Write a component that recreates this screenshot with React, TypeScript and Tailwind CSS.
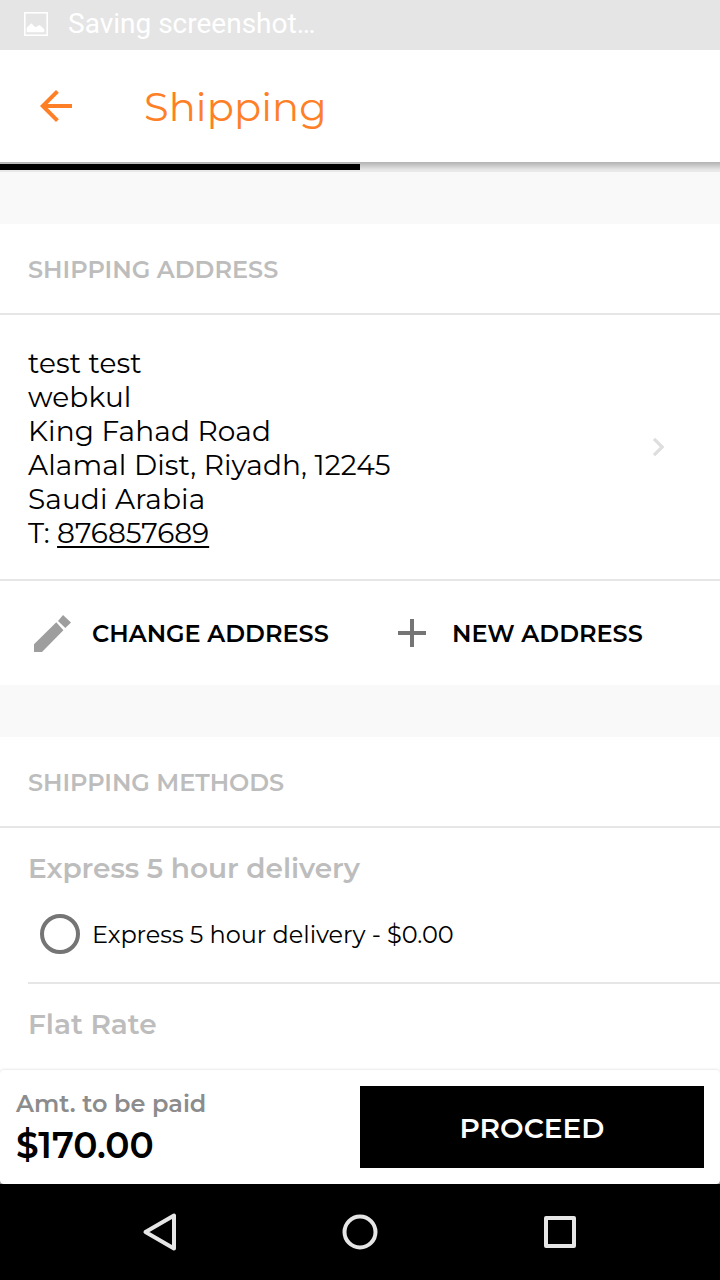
import type { ReactNode } from "react"
import { clsx } from "clsx"

const address = ["test test", "webkul", "King Fahad Road", "Alamal Dist, Riyadh, 12245", "Saudi Arabia"]

function StatusBar() {
  return (
    <div className="flex h-[50px] items-center bg-[#e5e5e5] pb-0.5 pl-6 text-white">
      <svg width="24" height="24" viewBox="0 0 24 24" className="mr-5">
        <rect x="0.8" y="0.8" width="22.4" height="22.4" fill="none" stroke="currentColor" strokeWidth="1.6" />
        <path d="M2.7 20.3v-4.6L7.3 11.3l4 4 4.4-2.3 4.6 4.3v3z" fill="currentColor" />
      </svg>
      <span className="font-['Roboto',sans-serif] text-[28px] leading-[48px]">Saving screenshot…</span>
    </div>
  )
}

function AppBar() {
  return (
    <header className="flex h-28 items-center bg-white pl-8 text-[#ff7f27]">
      <svg width="48" height="48" viewBox="0 0 24 24" fill="currentColor">
        <path d="M20 11H7.83l5.59-5.59L12 4l-8 8 8 8 1.41-1.41L7.83 13H20v-2z" />
      </svg>
      <h1 className="mt-px ml-16 text-[40px] leading-[48px] tracking-[0.1px]">Shipping</h1>
    </header>
  )
}

function Progress() {
  return (
    <div className="h-[10px] bg-linear-to-b from-[#b2b2b2] to-[#e8e8e8] to-80% pt-0.5">
      <div className="h-1.5 w-1/2 bg-black" />
    </div>
  )
}

function SectionTitle({ children, className }: { children: ReactNode; className?: string }) {
  return (
    <h2 className={clsx("flex h-[91px] items-center border-b-2 border-[#e6e6e6] pt-[3px] pl-7 text-[24px] font-semibold text-[#bdbdbd]", className)}>
      <span>{children}</span>
    </h2>
  )
}

function AddressCard() {
  return (
    <section className="bg-white">
      <SectionTitle>SHIPPING ADDRESS</SectionTitle>
      <div className="flex h-[266px] items-center justify-between border-b-2 border-[#e6e6e6] pr-14 pl-7">
        <div className="pt-0.5 text-[28px] leading-[34px] text-black">
          {address.map((line) => (
            <p key={line} className="tracking-[0.1px]">
              <span>{line}</span>
            </p>
          ))}
          <p>
            T: <a className="underline decoration-[1.6px] underline-offset-[3px]">876857689</a>
          </p>
        </div>
        <svg width="12" height="20" viewBox="0 0 12 20" fill="none" stroke="#dedede" strokeWidth="3.2">
          <path d="M2 1.8 10.2 10 2 18.2" />
        </svg>
      </div>
      <div className="grid h-[104px] grid-cols-2 text-[24px] font-semibold text-black">
        <button className="flex items-center pl-7">
          <svg width="48" height="48" viewBox="0 0 48 48" fill="#9e9e9e" className="mr-4">
            <path d="M6 35.3V43h8l21.4-21.7-7.1-8zM35 6l8 7.4-5.7 5.7-7.3-7.2z" />
          </svg>
          <span className="pt-0.5">CHANGE ADDRESS</span>
        </button>
        <button className="flex items-center pl-7">
          <svg width="48" height="48" viewBox="0 0 24 24" fill="#757575" className="mr-4">
            <path d="M19 13h-6v6h-2v-6H5v-2h6V5h2v6h6v2z" />
          </svg>
          <span className="pt-0.5">NEW ADDRESS</span>
        </button>
      </div>
    </section>
  )
}

function ShippingMethods() {
  return (
    <section className="flex-1 overflow-hidden bg-white">
      <SectionTitle className="tracking-[-0.05px]">SHIPPING METHODS</SectionTitle>
      <div className="pl-7">
        <div className="h-[156px] border-b-2 border-[#e6e6e6] pt-[23px]">
          <h3 className="text-[28px] leading-[34px] font-semibold tracking-[-0.05px] text-[#bdbdbd]">Express 5 hour delivery</h3>
          <label className="mt-[29px] flex h-10 items-center pl-3 text-[24px] tracking-[-0.06px] text-black">
            <span className="mr-3 size-10 rounded-full border-4 border-[#757575]" />
            <span className="pt-0.5">Express 5 hour delivery - $0.00</span>
          </label>
        </div>
        <h3 className="pt-[23px] text-[28px] leading-[34px] font-semibold text-[#bdbdbd]">Flat Rate</h3>
      </div>
    </section>
  )
}

function CheckoutBar() {
  return (
    <footer className="bg-linear-to-b from-white from-50% to-[#999] to-50%">
      <div className="flex h-[114px] justify-between rounded-[4px] bg-white p-4 shadow-[0_0_3px_rgba(0,0,0,0.18)]">
        <div>
          <p className="pt-px text-[24px] leading-[34px] font-semibold text-[#8c8c8c]">Amt. to be paid</p>
          <p className="mt-[3px] text-[36px] leading-[42px] font-semibold text-black">$170.00</p>
        </div>
        <button className="h-[82px] w-[344px] bg-black pt-px text-[28px] font-semibold text-white">PROCEED</button>
      </div>
    </footer>
  )
}

function NavBar() {
  return (
    <nav className="grid h-24 grid-cols-3 items-center justify-items-center bg-black px-[60px]">
      <svg width="48" height="48" viewBox="0 0 48 48" fill="none" stroke="#e6e6e6" strokeWidth="4" strokeLinejoin="round">
        <path d="M38 7.5v33L9.5 24z" />
      </svg>
      <svg width="48" height="48" viewBox="0 0 48 48" fill="none" stroke="#e6e6e6" strokeWidth="4">
        <circle cx="24" cy="24" r="15.5" />
      </svg>
      <svg width="48" height="48" viewBox="0 0 48 48" fill="none" stroke="#e6e6e6" strokeWidth="4" strokeLinejoin="round">
        <rect x="10" y="10" width="28" height="28" />
      </svg>
    </nav>
  )
}

export default function App() {
  return (
    <div className="flex h-[1280px] w-[720px] flex-col overflow-hidden bg-[#f9f9f9] font-['Montserrat','Inter',sans-serif]">
      <StatusBar />
      <AppBar />
      <Progress />
      <main className="flex min-h-0 flex-1 flex-col gap-[52px] pt-[52px]">
        <AddressCard />
        <ShippingMethods />
      </main>
      <CheckoutBar />
      <NavBar />
    </div>
  )
}
